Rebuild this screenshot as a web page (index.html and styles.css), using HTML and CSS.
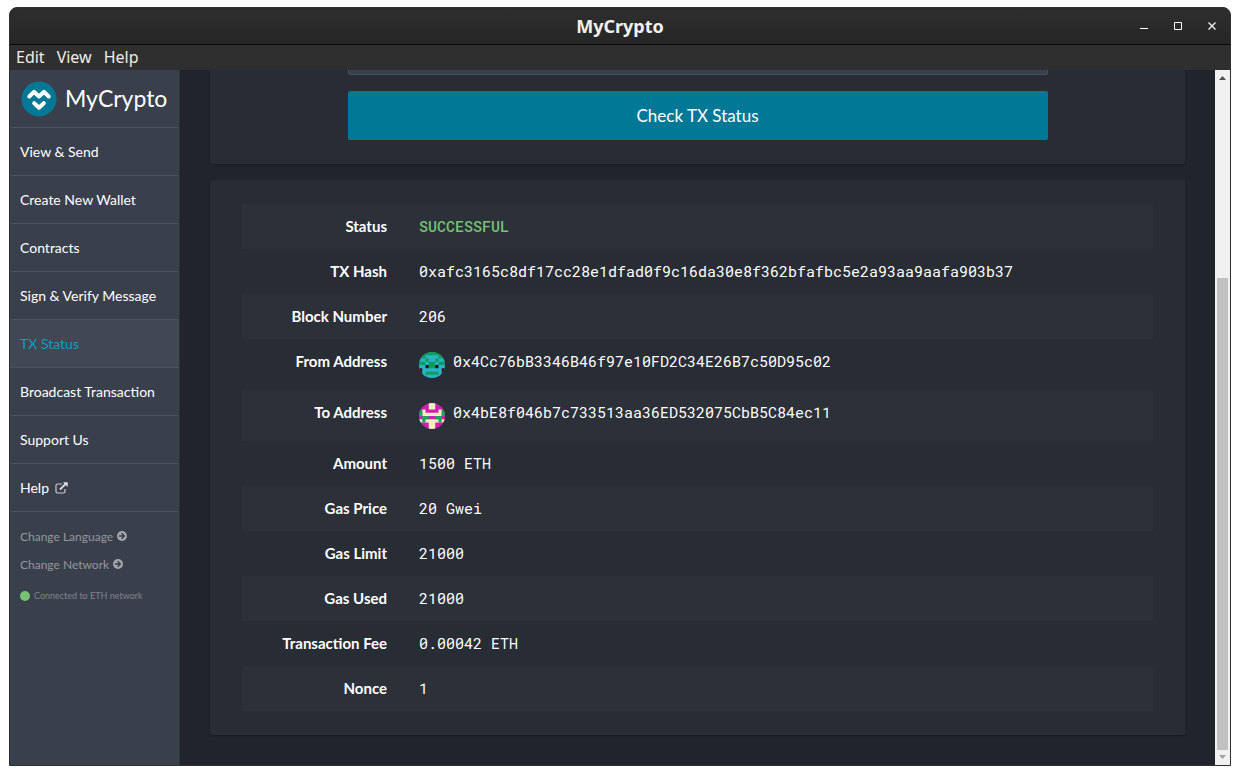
FILE: index.html
```html
<!DOCTYPE html>
<html lang="en">
<head>
<meta charset="utf-8">
<title>MyCrypto</title>
<link rel="stylesheet" href="styles.css">
</head>
<body>
<div class="window">
  <header class="titlebar">
    <h1 class="titlebar-title">MyCrypto</h1>
    <div class="window-controls">
      <button class="window-button" type="button" aria-label="Minimize"><svg width="10" height="10" viewBox="0 0 10 10"><path d="M1 7.500h8" stroke="#fff"/></svg></button>
      <button class="window-button" type="button" aria-label="Maximize"><svg width="10" height="10" viewBox="0 0 10 10"><path d="M1.500 1.500h7v7h-7z" fill="none" stroke="#fff"/></svg></button>
      <button class="window-button" type="button" aria-label="Close"><svg width="10" height="10" viewBox="0 0 10 10"><path d="M1.500 1.500l7 7M8.500 1.500l-7 7" stroke="#eee" stroke-width="1.400"/></svg></button>
    </div>
  </header>
  <nav class="menubar" aria-label="Application menu">
    <button type="button">Edit</button>
    <button type="button">View</button>
    <button type="button">Help</button>
  </nav>
  <div class="workspace">
    <aside class="sidebar">
      <a class="logo" href="#">
        <svg width="36" height="36" viewBox="0 0 36 36" aria-hidden="true">
          <circle cx="18" cy="18" r="17.500" fill="#007896"/>
          <path d="M8.300 15.500L13 10.800l5 4.700 5-4.700 4.700 4.700M13.200 22.200l4.800 4.500 4.800-4.500" fill="none" stroke="#fff" stroke-width="4" stroke-linecap="round" stroke-linejoin="round"/>
        </svg>
        <span>MyCrypto</span>
      </a>
      <nav class="nav" aria-label="Main">
        <a href="#">View &amp; Send</a>
        <a href="#">Create New Wallet</a>
        <a href="#">Contracts</a>
        <a href="#">Sign &amp; Verify Message</a>
        <a class="active" href="#">TX Status</a>
        <a href="#">Broadcast Transaction</a>
        <a href="#">Support Us</a>
        <a href="#">Help
          <svg width="13" height="12" viewBox="0 0 13 12" aria-hidden="true"><path d="M7 2H2.500Q1 2 1 3.500v6Q1 11 2.500 11h6Q10 11 10 9.500V7" fill="none" stroke="#c9ccd1" stroke-width="1.200"/><path d="M5 7.500L10.500 2" stroke="#d8dadd" stroke-width="1.800"/><path d="M8 .300h4.700V5z" fill="#e4e5e8"/></svg>
        </a>
      </nav>
      <div class="options">
        <button type="button">Change Language
          <svg width="10" height="10" viewBox="0 0 10 10" aria-hidden="true"><circle cx="5" cy="5" r="5" fill="#a3a6ac"/><path d="M2 5h5M4.600 2.300L7.300 5 4.600 7.700" fill="none" stroke="#3a3f4c" stroke-width="1.500"/></svg>
        </button>
        <button type="button">Change Network
          <svg width="10" height="10" viewBox="0 0 10 10" aria-hidden="true"><circle cx="5" cy="5" r="5" fill="#a3a6ac"/><path d="M2 5h5M4.600 2.300L7.300 5 4.600 7.700" fill="none" stroke="#3a3f4c" stroke-width="1.500"/></svg>
        </button>
      </div>
      <p class="network"><span class="dot"></span>Connected to ETH network</p>
    </aside>
    <main class="content">
      <section class="card">
        <form class="tx-form">
          <input type="text" aria-label="Transaction hash">
          <button type="button">Check TX Status</button>
        </form>
      </section>
      <section class="card">
        <table class="tx-table">
          <tbody>
            <tr><th scope="row">Status</th><td class="success">SUCCESSFUL</td></tr>
            <tr><th scope="row">TX Hash</th><td>0xafc3165c8df17cc28e1dfad0f9c16da30e8f362bfafbc5e2a93aa9aafa903b37</td></tr>
            <tr><th scope="row">Block Number</th><td>206</td></tr>
            <tr class="address"><th scope="row">From Address</th><td><div class="account">
              <svg class="identicon" viewBox="0 0 8 8" aria-hidden="true"><path fill="#26b5c8" d="M0 0h8v8H0z"/><path fill="#0f9b58" d="M0 0h8v1H0zM0 1h2v1H0zM6 1h2v1H6zM2 2h1v1H2zM5 2h1v1H5zM0 3h2v1H0zM6 3h2v1H6zM3 3h2v2H3zM2 6h4v1H2z"/><path fill="#3d0c14" d="M2 4h1v1H2zM5 4h1v1H5zM0 5h1v2H0zM7 5h1v2H7z"/></svg>
              <span>0x4Cc76bB3346B46f97e10FD2C34E26B7c50D95c02</span></div></td></tr>
            <tr class="address"><th scope="row">To Address</th><td><div class="account">
              <svg class="identicon" viewBox="0 0 8 8" aria-hidden="true"><path fill="#d41cb0" d="M0 0h8v8H0z"/><path fill="#f2eec0" d="M3 0h2v2H3zM1 2h1v1H1zM6 2h1v1H6zM1 3h6v1H1zM0 5h8v1H0zM3 6h2v2H3z"/><path fill="#12a862" d="M0 2h1v2H0zM7 2h1v2H7zM1 4h2v1H1zM5 4h2v1H5zM1 5h1v1H1zM6 5h1v1H6z"/></svg>
              <span>0x4bE8f046b7c733513aa36ED532075CbB5C84ec11</span></div></td></tr>
            <tr><th scope="row">Amount</th><td>1500 ETH</td></tr>
            <tr><th scope="row">Gas Price</th><td>20 Gwei</td></tr>
            <tr><th scope="row">Gas Limit</th><td>21000</td></tr>
            <tr><th scope="row">Gas Used</th><td>21000</td></tr>
            <tr><th scope="row">Transaction Fee</th><td>0.00042 ETH</td></tr>
            <tr><th scope="row">Nonce</th><td>1</td></tr>
          </tbody>
        </table>
      </section>
    </main>
    <div class="scrollbar" aria-hidden="true">
      <svg width="15" height="15" viewBox="0 0 15 15"><path d="M4 10h7L7.500 6z" fill="#505050"/></svg>
      <div class="track"><div class="thumb"></div></div>
      <svg width="15" height="15" viewBox="0 0 15 15"><path d="M4 5h7L7.500 9z" fill="#a3a3a3"/></svg>
    </div>
  </div>
</div>
</body>
</html>
```
FILE: styles.css
```css
* { box-sizing: border-box; }

body {
  margin: 0;
  height: 100vh;
  padding: 7px 9px 9px;
  background: #fff;
  color: #fff;
  font-family: Lato, "Liberation Sans", sans-serif;
  font-size: 14px;
}

button, input { font: inherit; color: inherit; }

a { color: inherit; text-decoration: none; }

.window {
  display: flex;
  flex-direction: column;
  height: 100%;
  overflow: hidden;
  border: 1px solid #303034;
  border-radius: 8px 8px 0 0;
  background: #2f2f2f;
}

.titlebar {
  display: grid;
  grid-template-columns: 1fr auto 1fr;
  align-items: center;
  flex: none;
  height: 37px;
  border-bottom: 1px solid #0a0a0a;
  background: linear-gradient(#2e2e2e, #262626);
}

.titlebar-title {
  grid-column: 2;
  margin: 0;
  color: #f2f1ef;
  font: bold 18px/24px "Noto Sans", "Open Sans", sans-serif;
}

.window-controls {
  display: flex;
  justify-content: flex-end;
  gap: 14px;
  padding-right: 8px;
}

.window-button {
  display: flex;
  align-items: center;
  justify-content: center;
  width: 20px;
  height: 20px;
  padding: 0;
  border: 0;
  background: none;
}

.menubar {
  display: flex;
  align-items: flex-start;
  flex: none;
  gap: 12px;
  height: 25px;
  padding: 0 6px;
  background: #2f2f2f;
}

.menubar button {
  padding: 0;
  border: 0;
  background: none;
  color: #f0eee8;
  font: 16px/24px "Noto Sans", "Open Sans", sans-serif;
}

.workspace {
  display: flex;
  flex: 1;
  min-height: 0;
}

.sidebar {
  flex: none;
  width: 170px;
  border-right: 1px solid #2e323c;
  background: #3a3f4c;
}

.logo {
  display: flex;
  align-items: center;
  gap: 8px;
  height: 58px;
  padding-left: 11px;
  border-bottom: 1px solid #4b505e;
  font-size: 23px;
  line-height: 32px;
}

.logo span { padding-bottom: 2px; }

.nav a {
  display: flex;
  align-items: center;
  gap: 6px;
  height: 48px;
  padding-left: 10px;
  border-bottom: 1px solid #4b505e;
}

.nav .active {
  background: #424754;
  color: #00a3c0;
}

.options { padding: 10px 10px 0; }

.options button {
  display: flex;
  align-items: center;
  gap: 4px;
  height: 28px;
  padding: 0;
  border: 0;
  background: none;
  color: #94979e;
  font-size: 12px;
}

.network {
  display: flex;
  align-items: center;
  gap: 4px;
  margin: 10px 0 0;
  padding: 0 10px;
  color: #81858d;
  font-size: 9px;
  line-height: 16px;
}

.dot {
  width: 10px;
  height: 10px;
  border-radius: 50%;
  background: #75c373;
}

.content {
  display: flex;
  flex: 1;
  flex-direction: column;
  justify-content: flex-end;
  gap: 16px;
  min-width: 0;
  padding: 0 30px 30px;
  overflow: hidden;
  background: #21242c;
}

.card {
  flex: none;
  padding: 24px 32px;
  border-radius: 2px;
  background: #282c34;
  box-shadow: 0 1px 2px rgba(0, 0, 0, 0.3);
}

.tx-form {
  display: flex;
  flex-direction: column;
  gap: 16px;
  max-width: 700px;
  margin: 0 auto;
}

.tx-form input {
  height: 48px;
  border: 1px solid #4b505e;
  border-radius: 2px;
  background: #3a3f4c;
}

.tx-form button {
  height: 49px;
  border: 0;
  border-radius: 2px;
  background: #007896;
  font-size: 17px;
}

.tx-table {
  width: 100%;
  border-collapse: collapse;
  font-size: 15px;
  line-height: 21px;
}

.tx-table tr:nth-child(odd) { background: #2c3038; }

.tx-table th,
.tx-table td {
  height: 45px;
  padding: 12px 16px;
}

.tx-table th {
  width: 161px;
  text-align: right;
  font-weight: 700;
}

.tx-table td {
  font-family: "Roboto Mono", "Liberation Mono", monospace;
}

.tx-table .address th,
.tx-table .address td {
  height: 51px;
  vertical-align: top;
}

.tx-table .address td { padding-bottom: 0; }

.tx-table .success {
  color: #75c373;
  font-weight: 500;
}

.account {
  display: flex;
  gap: 8px;
}

.identicon {
  width: 26px;
  height: 26px;
  margin-top: 1px;
  border-radius: 50%;
}

.scrollbar {
  display: flex;
  flex: none;
  flex-direction: column;
  width: 15px;
  background: #f1f1f1;
}

.track {
  display: flex;
  flex: 1;
  flex-direction: column;
  justify-content: flex-end;
  padding: 0 2px;
}

.thumb {
  height: 71%;
  background: #c1c1c1;
}
```
